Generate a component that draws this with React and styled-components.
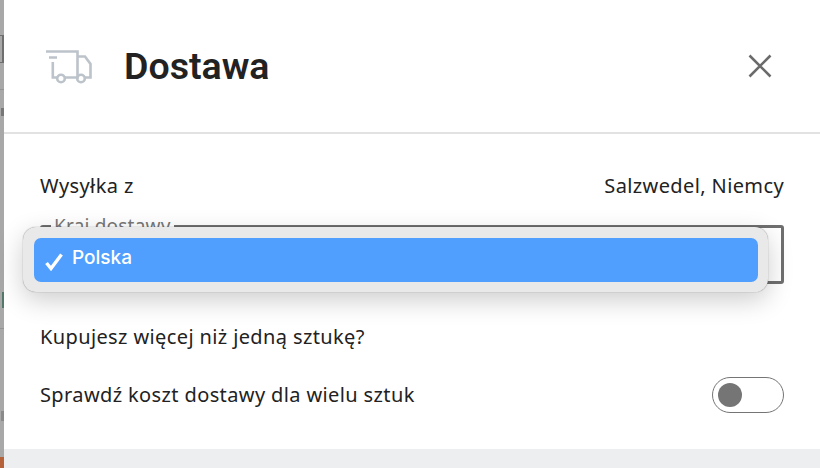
import React from "react";
import styled, { createGlobalStyle } from "styled-components";

const GlobalStyle = createGlobalStyle`
  html, body {
    margin: 0;
    padding: 0;
    background: #fff;
  }
  * {
    box-sizing: border-box;
  }
`;

const Page = styled.div`
  display: flex;
  width: 820px;
  height: 468px;
  overflow: hidden;
  font-family: "Noto Sans", "Open Sans", sans-serif;
  color: #222;
`;

const Backdrop = styled.div`
  position: relative;
  flex: 0 0 4px;
  background: #a8a8a8;
  overflow: hidden;
`;

const BackdropBit = styled.div`
  position: absolute;
  left: ${(p) => p.$left || 0}px;
  width: ${(p) => p.$width || 4}px;
  top: ${(p) => p.$top}px;
  height: ${(p) => p.$height}px;
  background: ${(p) => p.$color};
`;

const Panel = styled.div`
  flex: 1;
  display: flex;
  flex-direction: column;
  background: #fff;
`;

const Header = styled.header`
  flex: 0 0 134px;
  display: flex;
  align-items: center;
  padding: 0 48px 0 42px;
  border-bottom: 2px solid #e2e2e2;
`;

const TruckSvg = styled.svg`
  margin-top: 2px;
`;

const Title = styled.h2`
  flex: 1;
  margin: 0 0 0 32px;
  font: 600 37.5px/44px Roboto, sans-serif;
  color: #222;
`;

const Close = styled.button`
  display: flex;
  padding: 0;
  border: 0;
  background: none;
`;

const Body = styled.div`
  position: relative;
  flex: 1;
  padding: 38px 36px 0;
`;

const Row = styled.div`
  display: flex;
  justify-content: space-between;
  align-items: center;
  font-size: 20px;
  letter-spacing: 0.38px;
  line-height: 28px;
`;

const SelectField = styled.fieldset`
  height: 68px;
  margin: 16px 0 0;
  padding: 0 0 0 8px;
  border: 3px solid #6f6f6f;
  border-radius: 3px;
`;

const SelectLegend = styled.legend`
  padding: 0 3px;
  font-size: 19px;
  letter-spacing: 0.2px;
  line-height: 20px;
  color: #777;
`;

const Question = styled(Row)`
  margin-top: 39px;
`;

const ToggleRow = styled(Row)`
  margin-top: 26px;
`;

const Toggle = styled.div`
  display: flex;
  align-items: center;
  width: 72px;
  height: 36px;
  padding: 0 5px;
  border: 1.5px solid #757575;
  border-radius: 18px;
  background: #fff;
`;

const Knob = styled.div`
  width: 24px;
  height: 24px;
  border-radius: 50%;
  background: #757575;
`;

const Menu = styled.div`
  position: absolute;
  top: 93px;
  left: 19px;
  width: 745px;
  height: 65px;
  padding: 11px 10px 11px 11px;
  border-radius: 13px;
  background: #e9e9e9;
  box-shadow: 0 0 1px rgba(0, 0, 0, 0.55), 0 8px 26px rgba(0, 0, 0, 0.2);
`;

const MenuItem = styled.div`
  display: flex;
  align-items: center;
  height: 44px;
  padding: 0 0 5px 10px;
  border-radius: 7px;
  background: #509ffe;
  color: #fff;
  font: 500 19px/24px Inter, Roboto, sans-serif;
`;

const Check = styled.svg`
  flex: none;
  margin: 9px 8px 0 0;
`;

const Footer = styled.footer`
  flex: 0 0 19px;
  background: #edeef0;
`;

const TruckIcon = () => (
  <TruckSvg width="46" height="34" viewBox="0 0 46 34" fill="none" stroke="#bcc3ca" strokeWidth="2.6">
    <path d="M0 1.5h31.5v26h-12.500M3 7.500h8M6.800 12v15.500h4.500M31.500 6.500h7.500l5.500 7.500v13.500h-5.500" />
    <circle cx="15" cy="28.500" r="3.800" />
    <circle cx="35" cy="28.500" r="3.800" />
  </TruckSvg>
);

const CloseIcon = () => (
  <svg width="24" height="24" viewBox="0 0 24 24" stroke="#6b6b6b" strokeWidth="2.6">
    <path d="M1.500 1.500l21 21M22.500 1.500l-21 21" />
  </svg>
);

const App = () => {
  return (
    <Page>
      <GlobalStyle />
      <Backdrop>
        <BackdropBit $top={35} $height={1} $color="#6f6f6f" />
        <BackdropBit $top={36} $height={26} $left={2} $width={2} $color="#6f6f6f" />
        <BackdropBit $top={62} $height={1} $color="#6f6f6f" />
        <BackdropBit $top={89} $height={1} $color="#949494" />
        <BackdropBit $top={108} $height={8} $left={1} $width={3} $color="#777" />
        <BackdropBit $top={292} $height={16} $left={2} $width={2} $color="#54786a" />
        <BackdropBit $top={328} $height={1} $color="#949494" />
        <BackdropBit $top={411} $height={10} $left={1} $width={3} $color="#8a8a8a" />
        <BackdropBit $top={457} $height={11} $color="#b5613a" />
      </Backdrop>
      <Panel>
        <Header>
          <TruckIcon />
          <Title>Dostawa</Title>
          <Close aria-label="Zamknij">
            <CloseIcon />
          </Close>
        </Header>
        <Body>
          <Row>
            <span>Wysyłka z</span>
            <span>Salzwedel, Niemcy</span>
          </Row>
          <SelectField>
            <SelectLegend>Kraj dostawy</SelectLegend>
          </SelectField>
          <Question>Kupujesz więcej niż jedną sztukę?</Question>
          <ToggleRow>
            <span>Sprawdź koszt dostawy dla wielu sztuk</span>
            <Toggle>
              <Knob />
            </Toggle>
          </ToggleRow>
          <Menu>
            <MenuItem>
              <Check width="20" height="18" viewBox="0 0 20 18" fill="none" stroke="#fff" strokeWidth="3.400">
                <path d="M2.500 10l4.500 5.500L17.500 1.500" />
              </Check>
              Polska
            </MenuItem>
          </Menu>
        </Body>
        <Footer />
      </Panel>
    </Page>
  );
};

export default App;
